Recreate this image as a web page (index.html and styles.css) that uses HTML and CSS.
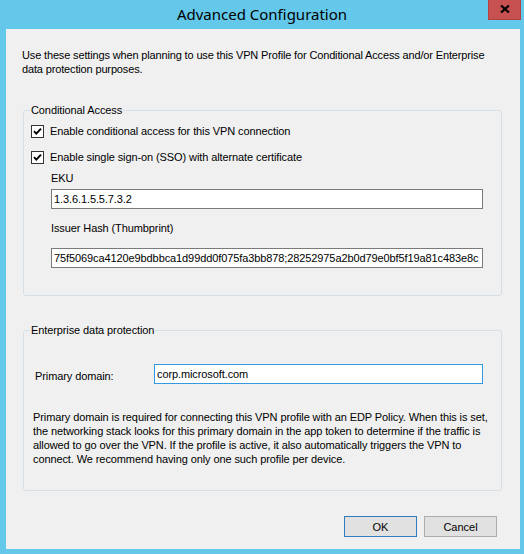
FILE: index.html
```html
<!DOCTYPE html>
<html lang="en">
<head>
<meta charset="utf-8">
<title>Advanced Configuration</title>
<link rel="stylesheet" href="styles.css">
</head>
<body>
<div class="window">
  <div class="titlebar">
    <h1 class="title">Advanced Configuration</h1>
    <button class="close" aria-label="Close">
      <svg width="10" height="8" viewBox="0 0 10 8"><path d="M1 0.5 L9 7.5 M9 0.5 L1 7.5" stroke="#000" stroke-width="2.2" fill="none"/></svg>
    </button>
  </div>
  <div class="client">
    <p class="intro">Use these settings when planning to use this VPN Profile for Conditional Access and/or Enterprise<br>data protection purposes.</p>

    <fieldset class="group ca">
      <legend>Conditional Access</legend>
      <label class="check"><span class="box"><svg width="11" height="11" viewBox="0 0 11 11"><path d="M2 5.2 L4.3 7.6 L9 2.6" stroke="#000" stroke-width="1.9" fill="none"/></svg></span>Enable conditional access for this VPN connection</label>
      <label class="check second"><span class="box"><svg width="11" height="11" viewBox="0 0 11 11"><path d="M2 5.2 L4.3 7.6 L9 2.6" stroke="#000" stroke-width="1.9" fill="none"/></svg></span>Enable single sign-on (SSO) with alternate certificate</label>
      <div class="field">
        <div class="flabel">EKU</div>
        <div class="input">1.3.6.1.5.5.7.3.2</div>
      </div>
      <div class="field field-issuer">
        <div class="flabel">Issuer Hash (Thumbprint)</div>
        <div class="input hash">75f5069ca4120e9bdbbca1d99dd0f075fa3bb878;28252975a2b0d79e0bf5f19a81c483e8c</div>
      </div>
    </fieldset>

    <fieldset class="group edp">
      <legend>Enterprise data protection</legend>
      <div class="domain-row">
        <div class="dlabel">Primary domain:</div>
        <div class="input focused">corp.microsoft.com</div>
      </div>
      <p class="note">Primary domain is required for connecting this VPN profile with an EDP Policy. When this is set,<br>the networking stack looks for this primary domain in the app token to determine if the traffic is<br>allowed to go over the VPN. If the profile is active, it also automatically triggers the VPN to<br>connect. We recommend having only one such profile per device.</p>
    </fieldset>

    <div class="buttons">
      <button class="btn default">OK</button>
      <button class="btn">Cancel</button>
    </div>
  </div>
</div>
</body>
</html>
```

FILE: styles.css
```css
html, body {
  margin: 0;
  padding: 0;
}
body {
  background: #63c8ea;
  font-family: "Liberation Sans", Arial, sans-serif;
  font-size: 11px;
  letter-spacing: -0.1px;
  color: #000;
}
.window {
  width: 524px;
  height: 554px;
  display: flex;
  flex-direction: column;
}
.titlebar {
  height: 29px;
  display: grid;
  grid-template-columns: 1fr auto 1fr;
  align-items: start;
}
.title {
  grid-column: 2;
  margin: 4px 0 0 0;
  font-family: "Noto Sans", sans-serif;
  font-weight: normal;
  font-size: 15px;
  line-height: 20px;
  letter-spacing: 0;
  color: #000;
}
.close {
  grid-column: 3;
  justify-self: end;
  width: 33px;
  height: 20px;
  margin: 0 3px 0 0;
  padding: 0;
  border: 1px solid #b34343;
  border-top: none;
  background: #c75050;
  display: flex;
  align-items: center;
  justify-content: center;
}
.close svg {
  display: block;
  margin-top: -1px;
}
.client {
  margin: 0 4px 5px 6px;
  height: 520px;
  background: #f0f0f0;
  padding: 0 18px 0 17px;
  box-sizing: border-box;
  display: flex;
  flex-direction: column;
}
.intro {
  margin: 19px 0 0 -1px;
  line-height: 14px;
  letter-spacing: -0.15px;
}
.group {
  margin: 28px 0 0 0;
  padding: 0 0 0 7px;
  border: 1px solid #d5dfe5;
  border-radius: 3px;
  min-width: 0;
}
.group legend {
  padding: 0 1px;
  margin-left: -1px;
  line-height: 13px;
}
.ca {
  padding-bottom: 27px;
}
.check {
  display: flex;
  align-items: center;
  height: 13px;
  line-height: 13px;
  margin-top: 8px;
}
.check.second {
  margin-top: 13px;
}
.box {
  width: 13px;
  height: 13px;
  box-sizing: border-box;
  border: 1px solid #333;
  background: #fff;
  margin-right: 6px;
  display: flex;
}
.box svg {
  display: block;
}
.field {
  margin-left: 20px;
  width: 432px;
}
.flabel {
  line-height: 14px;
  margin-top: 7px;
}
.field-issuer .flabel {
  margin-top: 12px;
}
.field-issuer .input {
  margin-top: 13px;
}
.input {
  margin-top: 4px;
  height: 20px;
  box-sizing: border-box;
  border: 1px solid #7a7a7a;
  background: #fff;
  line-height: 18px;
  padding-left: 2px;
  white-space: nowrap;
  overflow: hidden;
}
.input.hash {
  letter-spacing: -0.1px;
}
.input.focused {
  border-color: #3399e0;
  margin-top: 0;
  width: 329px;
}
.edp {
  padding-bottom: 24px;
}
.domain-row {
  display: flex;
  align-items: flex-start;
  margin-top: 27px;
}
.dlabel {
  width: 119px;
  margin-left: 4px;
  margin-top: 5px;
  line-height: 14px;
}
.note {
  margin: 26px 0 0 2px;
  line-height: 14px;
  white-space: nowrap;
}
.buttons {
  display: flex;
  justify-content: flex-end;
  gap: 7px;
  margin-top: 25px;
  margin-right: 5px;
}
.btn {
  width: 73px;
  height: 21px;
  box-sizing: border-box;
  border: 1px solid #adadad;
  background: #e1e1e1;
  font-family: "Liberation Sans", Arial, sans-serif;
  font-size: 11px;
  letter-spacing: 0;
  color: #000;
  padding: 0;
}
.btn.default {
  border-color: #2f7cc0;
}
```
